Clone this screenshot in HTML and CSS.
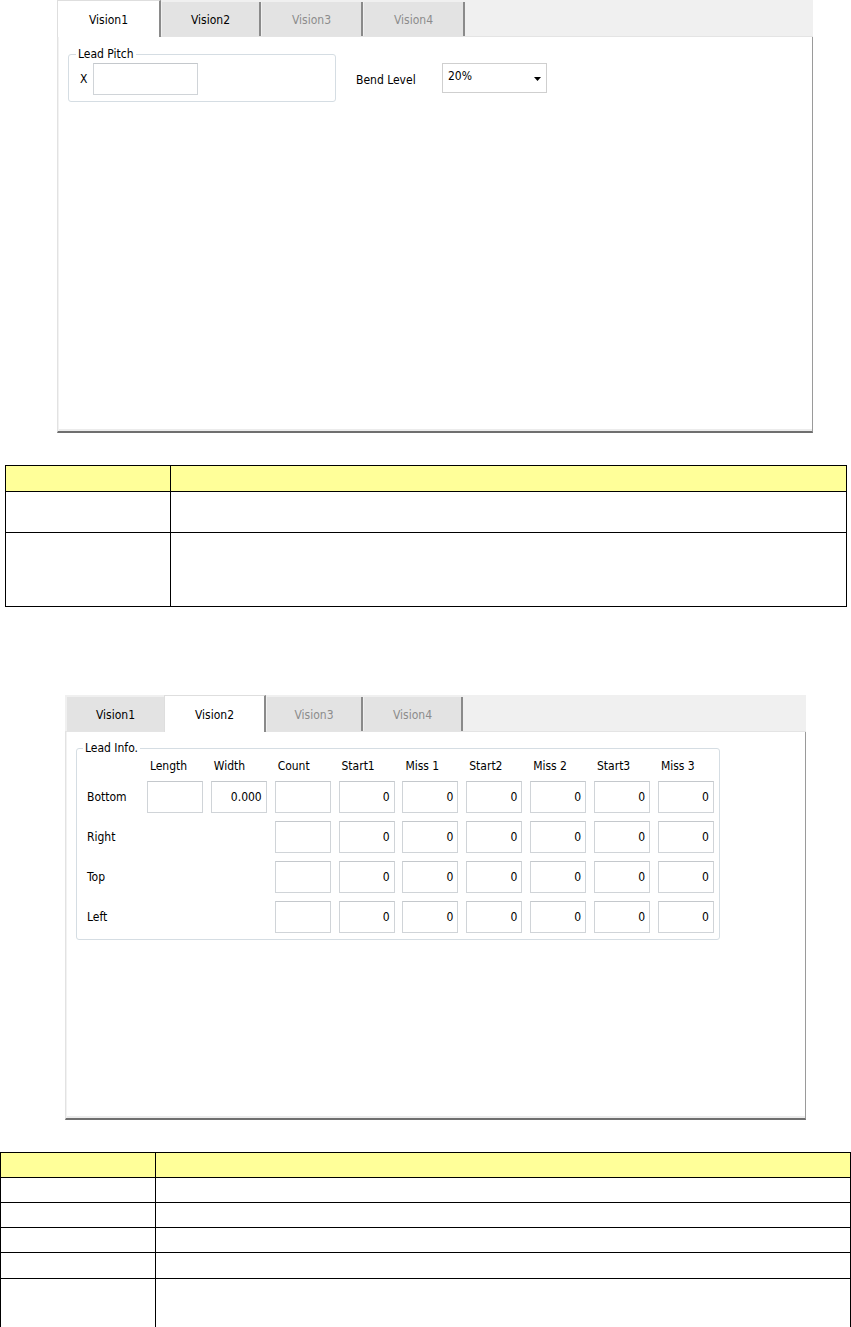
FILE: index.html
```html
<!DOCTYPE html>
<html>
<head>
<meta charset="utf-8">
<title>Vision settings</title>
<link rel="stylesheet" href="styles.css">
</head>
<body>
<section class="tabs tabs-one">
  <div class="tabbar">
    <div class="tab tab-active">Vision1</div>
    <div class="tab">Vision2</div>
    <div class="tab tab-dim">Vision3</div>
    <div class="tab tab-dim">Vision4</div>
  </div>
  <div class="pane pane-one">
    <fieldset class="group pitch">
      <legend>Lead Pitch</legend>
      <span class="xlabel">X</span>
      <div class="field pitch-field"></div>
    </fieldset>
    <div class="bend">
      <span class="bend-label">Bend Level</span>
      <div class="combo">
        <span class="combo-text">20%</span>
        <svg class="combo-arrow" width="7" height="4" viewBox="0 0 7 4"><polygon points="0,0 7,0 3.5,4" fill="#000"/></svg>
      </div>
    </div>
  </div>
</section>

<table class="spec spec-one">
  <colgroup><col class="c1a"><col></colgroup>
  <tr class="head r26"><td></td><td></td></tr>
  <tr class="r41"><td></td><td></td></tr>
  <tr class="r74"><td></td><td></td></tr>
</table>

<section class="tabs tabs-two">
  <div class="tabbar">
    <div class="tab">Vision1</div>
    <div class="tab tab-active">Vision2</div>
    <div class="tab tab-dim">Vision3</div>
    <div class="tab tab-dim">Vision4</div>
  </div>
  <div class="pane pane-two">
    <fieldset class="group lead">
      <legend>Lead Info.</legend>
      <div class="grid">
        <span></span>
        <span class="colhead">Length</span>
        <span class="colhead">Width</span>
        <span class="colhead">Count</span>
        <span class="colhead">Start1</span>
        <span class="colhead">Miss 1</span>
        <span class="colhead">Start2</span>
        <span class="colhead">Miss 2</span>
        <span class="colhead">Start3</span>
        <span class="colhead">Miss 3</span>

        <span class="rowhead">Bottom</span>
        <div class="field num"></div>
        <div class="field num">0.000</div>
        <div class="field num"></div>
        <div class="field num">0</div>
        <div class="field num">0</div>
        <div class="field num">0</div>
        <div class="field num">0</div>
        <div class="field num">0</div>
        <div class="field num">0</div>

        <span class="rowhead">Right</span>
        <span></span>
        <span></span>
        <div class="field num"></div>
        <div class="field num">0</div>
        <div class="field num">0</div>
        <div class="field num">0</div>
        <div class="field num">0</div>
        <div class="field num">0</div>
        <div class="field num">0</div>

        <span class="rowhead">Top</span>
        <span></span>
        <span></span>
        <div class="field num"></div>
        <div class="field num">0</div>
        <div class="field num">0</div>
        <div class="field num">0</div>
        <div class="field num">0</div>
        <div class="field num">0</div>
        <div class="field num">0</div>

        <span class="rowhead">Left</span>
        <span></span>
        <span></span>
        <div class="field num"></div>
        <div class="field num">0</div>
        <div class="field num">0</div>
        <div class="field num">0</div>
        <div class="field num">0</div>
        <div class="field num">0</div>
        <div class="field num">0</div>
      </div>
    </fieldset>
  </div>
</section>

<table class="spec spec-two">
  <colgroup><col class="c2a"><col></colgroup>
  <tr class="head r25"><td></td><td></td></tr>
  <tr class="r25"><td></td><td></td></tr>
  <tr class="r25"><td></td><td></td></tr>
  <tr class="r25"><td></td><td></td></tr>
  <tr class="r26"><td></td><td></td></tr>
  <tr class="r50"><td></td><td></td></tr>
</table>
</body>
</html>
```

FILE: styles.css
```css
html, body {
  margin: 0;
  padding: 0;
  background: #fff;
}

body {
  font-family: "DejaVu Sans Condensed", "DejaVu Sans", sans-serif;
  font-size: 12px;
  color: #000;
}

/* ---------- tab panels ---------- */
.tabs {
  box-sizing: border-box;
}

.tabs-one {
  width: 756px;
  margin-left: 57px;
}

.tabs-two {
  width: 741px;
  margin-left: 65px;
  margin-top: 88px;
}

.tabbar {
  display: flex;
  align-items: flex-end;
  height: 37px;
  background: #f0f0f0;
  box-shadow: inset 0 -1px 0 #e4e4e4;
}

.tab {
  box-sizing: border-box;
  height: 34px;
  margin-bottom: 1px;
  margin-left: 1px;
  background: #e3e3e3;
  border-right: 2px solid #8a8a8a;
  display: flex;
  align-items: center;
  justify-content: center;
  white-space: nowrap;
  padding-top: 2px;
}

.tab-active {
  height: 37px;
  margin-bottom: 0;
  background: #fff;
  border-top: 1px solid #dedede;
  border-left: 1px solid #dedede;
  padding-top: 1px;
}

.tab-dim {
  color: #8c8c8c;
}

.tabs-one .tab:nth-child(1) { width: 104px; margin-left: 0; }
.tabs-one .tab:nth-child(2) { width: 99px; }
.tabs-one .tab:nth-child(3) { width: 101px; }
.tabs-one .tab:nth-child(4) { width: 101px; }

.tabs-two .tabbar { padding-left: 2px; }
.tabs-two .tab:nth-child(1) { width: 97px; margin-left: 0; border-right: 0; }
.tabs-two .tab:nth-child(2) { width: 102px; margin-left: 0; }
.tabs-two .tab:nth-child(3) { width: 96px; }
.tabs-two .tab:nth-child(4) { width: 99px; }

.pane {
  box-sizing: border-box;
  background: #fff;
  border-left: 1px solid #e2e2e2;
  border-right: 1px solid #9a9a9a;
  border-bottom: 2px solid #6f6f6f;
  box-shadow: inset 1px 0 0 #f2f2f2, inset 0 -2px 0 #ececec;
}

.pane-one {
  height: 396px;
  padding: 10px 0 0 10px;
  display: flex;
  align-items: flex-start;
}

.pane-two {
  height: 388px;
  padding: 9px 0 0 10px;
}

/* ---------- group boxes ---------- */
.group {
  margin: 0;
  min-width: 0;
  border: 1px solid #d5dde3;
  border-radius: 3px;
}

.group legend {
  padding: 0 2px;
  margin-left: -4px;
  line-height: 14px;
}

.pitch {
  box-sizing: border-box;
  width: 268px;
  padding: 2px 0 6px 11px;
  display: flex;
  align-items: center;
}

.xlabel {
  width: 7px;
}

.field {
  box-sizing: border-box;
  height: 32px;
  background: #fff;
  border: 1px solid #d0d4d8;
  border-top-color: #c4c8cc;
}

.pitch-field {
  width: 105px;
  margin-left: 6px;
}

/* ---------- bend level combo ---------- */
.bend {
  display: flex;
  align-items: center;
  margin-left: 20px;
  margin-top: 16px;
}

.bend-label {
  width: 86px;
  padding-top: 3px;
}

.combo {
  box-sizing: border-box;
  width: 105px;
  height: 30px;
  border: 1px solid #cfcfcf;
  background: #fff;
  display: flex;
  justify-content: space-between;
  align-items: flex-start;
  padding: 5px 5px 0 5px;
}

.combo-text {
  line-height: 14px;
}

.combo-arrow {
  align-self: center;
  margin-top: -3px;
}

/* ---------- lead info grid ---------- */
.lead {
  box-sizing: border-box;
  width: 644px;
  padding: 5px 5px 6px 10px;
}

.grid {
  display: grid;
  grid-template-columns: 52px repeat(9, 56px);
  grid-template-rows: 13px repeat(4, 32px);
  column-gap: 7.875px;
  row-gap: 8px;
}

.colhead {
  padding-left: 3px;
  line-height: 13px;
  white-space: nowrap;
}

.rowhead {
  align-self: center;
  white-space: nowrap;
}

.num {
  text-align: right;
  padding-right: 4px;
  line-height: 30px;
  color: #000;
}

/* ---------- spec tables ---------- */
.spec {
  border-collapse: collapse;
  table-layout: fixed;
}

.spec td {
  border: 1px solid #000;
  padding: 0;
}

.spec .head td {
  background: #ffff99;
}

.spec-one {
  width: 842px;
  margin: 32px 0 0 5px;
}

.spec-two {
  width: 851px;
  margin: 32px 0 0 0;
}

.c1a { width: 165px; }
.c2a { width: 155px; }

.r25 { height: 25px; }
.r26 { height: 26px; }
.r41 { height: 41px; }
.r50 { height: 50px; }
.r74 { height: 74px; }
```
